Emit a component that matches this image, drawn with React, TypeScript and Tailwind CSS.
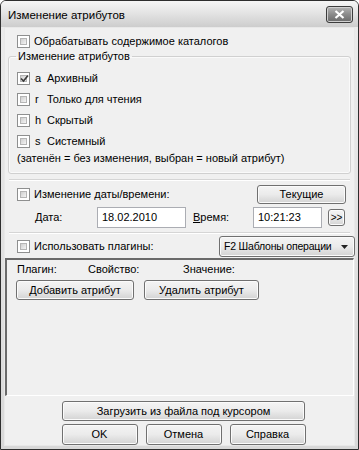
import React from "react";

function Check({ checked }: { checked?: boolean }) {
  return (
    <span className="relative w-[13px] h-[13px] shrink-0 border border-[#8e8f8f] bg-white p-[2px] flex">
      <span className="flex-1 bg-gradient-to-br from-[#cfcfcf] to-[#f4f4f4] border border-[#b5b5b5] flex items-center justify-center">
        {checked && (
          <svg width="9" height="9" viewBox="0 0 9 9" className="absolute left-[2px] top-[1px]">
            <path d="M1 4.5 L3.5 7 L8 1.5" stroke="#3a3a3a" strokeWidth="1.6" fill="none" />
          </svg>
        )}
      </span>
    </span>
  );
}

const btnSkin =
  "flex items-center whitespace-nowrap border border-[#707070] rounded-[3px] bg-gradient-to-b from-[#f4f4f4] via-[#ebebeb] to-[#d3d3d3] shadow-[inset_0_0_0_1px_#fbfbfb] text-black";

function Btn({ children, className = "" }: { children: React.ReactNode; className?: string }) {
  return <div className={`${btnSkin} justify-center ${className}`}>{children}</div>;
}

function Sep() {
  return <div className="mx-[4px] h-[2px] border-t border-[#d5d5d5] border-b border-b-white" />;
}

export default function App() {
  return (
    <div className="w-[359px] h-[450px] font-['Liberation_Sans',Arial,sans-serif] text-[11px] leading-[13px] text-black">
      <div className="w-full h-full rounded-t-[6px] border border-[#2e2e2e] bg-gradient-to-b from-[#ececec] to-[#d8d8d8] flex flex-col">
        {/* Title bar */}
        <div className="h-[26px] flex items-center justify-between pl-[7px] pr-[5px] shrink-0 bg-gradient-to-b from-[#f6f6f6] via-[#e2e2e2] to-[#cdcdcd] rounded-t-[5px]">
          <span className="text-[11.5px] leading-[14px] mt-[1px]">Изменение атрибутов</span>
          <div className="w-[27px] h-[17px] rounded-[3px] border border-[#3c3c3c] bg-gradient-to-b from-[#b4b4b4] via-[#8a8a8a] to-[#6a6a6a] flex items-center justify-center shadow-[inset_0_0_0_1px_#d0d0d0]">
            <svg width="11" height="9" viewBox="0 0 11 9">
              <path d="M1.5 1 L9.5 8 M9.5 1 L1.5 8" stroke="white" strokeWidth="2.2" />
            </svg>
          </div>
        </div>
        {/* Body */}
        <div className="mx-[3px] mb-[3px] flex-1 bg-[#f0f0f0] border border-[#e8e8e8] flex flex-col">
          <div className="mt-[7px] ml-[12px] flex items-center h-[13px] gap-[4px]">
            <Check />
            <span>Обрабатывать содержимое каталогов</span>
          </div>

          <fieldset className="mt-[2px] mx-[3px] border border-[#d0d0d0] rounded-[3px] pl-[8px] pb-[8px] shadow-[inset_0_0_0_1px_#fafafa]">
            <legend className="px-[2px] ml-[-1px] leading-[13px]">Изменение атрибутов</legend>
            <div className="mt-[9px] flex flex-col gap-[8px]">
              {[
                ["a", "Архивный", true],
                ["r", "Только для чтения", false],
                ["h", "Скрытый", false],
                ["s", "Системный", false],
              ].map(([k, l, c]) => (
                <div key={k as string} className="flex items-center h-[13px]">
                  <Check checked={c as boolean} />
                  <span className="ml-[5px] w-[12px]">{k as string}</span>
                  <span>{l as string}</span>
                </div>
              ))}
            </div>
            <div className="mt-[4px] h-[13px]">(затенён = без изменения, выбран = новый атрибут)</div>
          </fieldset>

          <div className="mt-[5px]">
            <Sep />
          </div>

          <div className="mt-[4px] h-[19px] flex items-center">
            <div className="ml-[12px] flex items-center gap-[4px]">
              <Check />
              <span>Изменение даты/времени:</span>
            </div>
            <Btn className="ml-auto mr-[8px] w-[89px] h-[19px]">Текущие</Btn>
          </div>

          <div className="mt-[3px] h-[21px] flex items-center">
            <span className="ml-[30px] w-[62px]">
              <span className="underline">Д</span>ата:
            </span>
            <div className="w-[89px] h-[21px] bg-white border border-[#abadb3] flex items-center pl-[4px]">18.02.2010</div>
            <span className="ml-[7px] w-[60px]">
              <span className="underline">В</span>ремя:
            </span>
            <div className="w-[69px] h-[21px] bg-white border border-[#abadb3] flex items-center pl-[4px]">10:21:23</div>
            <Btn className="ml-[6px] w-[17px] h-[17px] rounded-[2px] text-[10px]">&gt;&gt;</Btn>
          </div>

          <div className="mt-[4px]">
            <Sep />
          </div>

          <div className="mt-[2px] h-[21px] flex items-center">
            <div className="ml-[12px] flex items-center gap-[4px]">
              <Check />
              <span>Использовать плагины:</span>
            </div>
            <div className={`${btnSkin} justify-between ml-auto mr-[-1px] w-[136px] h-[21px] pl-[4px] pr-[6px]`}>
              <span className="text-[10.5px] tracking-[-0.2px]">F2 Шаблоны операции</span>
              <svg width="7" height="4" viewBox="0 0 7 4">
                <path d="M0 0 L7 0 L3.5 4 Z" fill="#222" />
              </svg>
            </div>
          </div>

          <div className="mt-[1px] h-[138px] border-t-2 border-l-2 border-t-[#6a6a6a] border-l-[#6a6a6a] border-b border-r border-b-[#ffffff] border-r-[#ffffff] flex flex-col">
            <div className="mt-[3px] h-[13px] flex items-center">
              <span className="ml-[10px] w-[71px]">Плагин:</span>
              <span className="w-[95px]">Свойство:</span>
              <span>Значение:</span>
            </div>
            <div className="mt-[4px] flex gap-[10px] ml-[9px]">
              <Btn className="w-[118px] h-[20px]">Добавить атрибут</Btn>
              <Btn className="w-[115px] h-[20px]">Удалить атрибут</Btn>
            </div>
          </div>

          <div className="mt-[5px] pl-[8px] flex flex-col items-center gap-[3px]">
            <Btn className="w-[243px] h-[20px]">Загрузить из файла под курсором</Btn>
            <div className="flex gap-[8px]">
              <Btn className="w-[76px] h-[21px]">OK</Btn>
              <Btn className="w-[76px] h-[21px]">Отмена</Btn>
              <Btn className="w-[76px] h-[21px]">Справка</Btn>
            </div>
          </div>
        </div>
      </div>
    </div>
  );
}
